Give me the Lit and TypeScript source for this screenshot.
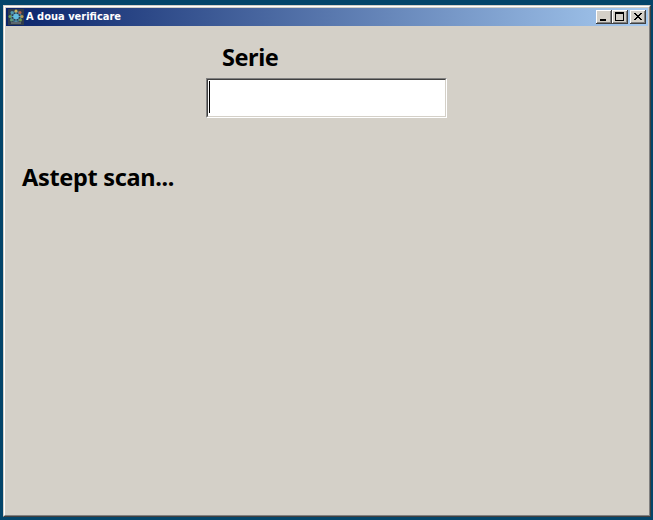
import { LitElement, html, css, svg } from "lit";
import { customElement } from "lit/decorators.js";

const dots: [number, number, string][] = [
  [8, 2, "#c9b45c"], [12, 3.5, "#b8604c"], [14, 7.5, "#b89a50"], [12.5, 11, "#6f9a4c"],
  [3.5, 11, "#5f9a78"], [2, 7.5, "#6fa050"], [4, 3.5, "#4f9ab0"],
];

@customElement("app-root")
export class AppRoot extends LitElement {
  static styles = css`
    :host { display: block; width: 653px; height: 520px; box-sizing: border-box; padding: 5px 2px 3px 3px; background: #04456a; overflow: hidden; color: #000; }
    .window { box-sizing: border-box; width: 648px; height: 512px; background: #d4d0c8; border: 1px solid; border-color: #d4d0c8 #404040 #404040 #d4d0c8; }
    .inner { box-sizing: border-box; height: 100%; border: 1px solid; border-color: #fff #808080 #808080 #fff; padding: 1px; }
    .title { display: flex; align-items: center; box-sizing: border-box; height: 18px; padding: 0 2px; background: linear-gradient(to right, #0a246a, #a6caf0); }
    .icon { width: 16px; height: 16px; flex: none; }
    .caption { flex: 1; margin-left: 2px; color: #fff; font: bold 11px/18px "DejaVu Sans Condensed", "DejaVu Sans", sans-serif; font-stretch: condensed; letter-spacing: 0; white-space: nowrap; }
    .btn { box-sizing: border-box; width: 16px; height: 14px; background: #d4d0c8; box-shadow: inset -1px -1px #404040, inset 1px 1px #fff, inset -2px -2px #808080; }
    .btn svg { display: block; }
    .close { margin-left: 2px; }
    .body { display: flex; flex-direction: column; align-items: flex-start; font: bold 23.5px/32px "Noto Sans", "Open Sans", sans-serif; white-space: nowrap; }
    .label { margin: 15px 0 0 216px; letter-spacing: -0.45px; }
    .field { box-sizing: border-box; width: 241px; height: 40px; margin: 5px 0 0 200px; background: #fff; border: 1px solid; border-color: #808080 #fff #fff #808080; }
    .well { box-sizing: border-box; height: 100%; border: 1px solid; border-color: #404040 #d4d0c8 #d4d0c8 #404040; padding: 1px; }
    .caret { width: 1px; height: 32px; background: #000; }
    .status { margin: 43px 0 0 16px; letter-spacing: -0.32px; }
  `;

  render() {
    return html`
      <div class="window"><div class="inner">
        <div class="title">
          <svg class="icon" viewBox="0 0 16 16">
            <rect width="16" height="16" fill="#303c4c" />
            <circle cx="8" cy="7.5" r="5" fill="none" stroke="#4a7890" stroke-width="1.5" />
            <path d="M8 2v11M3 7.5h10M4.5 4l7 7M11.5 4l-7 7" stroke="#4d9cc0" />
            <circle cx="8" cy="7.5" r="2.8" fill="#62bce0" />
            ${dots.map(([x, y, c]) => svg`<circle cx=${x} cy=${y} r="1.5" fill=${c} />`)}
            <path d="M3 14h10" stroke="#6c7478" stroke-width="1.5" />
          </svg>
          <span class="caption">A doua verificare</span>
          <div class="btn"><svg width="16" height="14" shape-rendering="crispEdges"><path d="M4 9h6v2H4z" /></svg></div>
          <div class="btn"><svg width="16" height="14" shape-rendering="crispEdges"><path fill-rule="evenodd" d="M3 2h9v9H3zM4 4v6h7V4z" /></svg></div>
          <div class="btn close"><svg width="16" height="14" shape-rendering="crispEdges"><path d="M4 3h2v1h1v1h2V4h1V3h2v1h-1v1h-1v1H9v1h1v1h1v1h1v1h-2V9H9V8H7v1H6v1H4V9h1V8h1V7h1V6H6V5H5V4H4z" /></svg></div>
        </div>
        <div class="body">
          <div class="label">Serie</div>
          <div class="field"><div class="well"><div class="caret"></div></div></div>
          <div class="status">Astept scan...</div>
        </div>
      </div></div>`;
  }
}
